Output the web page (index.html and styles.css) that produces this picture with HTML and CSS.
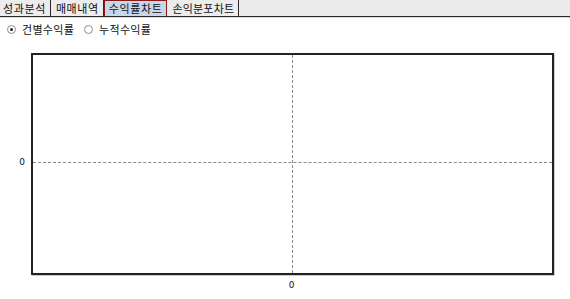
FILE: index.html
```html
<!DOCTYPE html>
<html lang="ko">
<head>
<meta charset="utf-8">
<link rel="stylesheet" href="styles.css">
</head>
<body>
<div class="tabs">
  <div class="tab">성과분석</div>
  <div class="tab">매매내역</div>
  <div class="tab active">수익률차트</div>
  <div class="tab tight">손익분포차트</div>
</div>
<div class="options">
  <label class="opt"><span class="radio checked"></span>건별수익률</label>
  <label class="opt"><span class="radio"></span>누적수익률</label>
</div>
<div class="chart-area">
  <div class="yaxis"><span class="ylabel">0</span></div>
  <div class="plot-col">
    <div class="plot">
      <div class="hline"></div>
      <div class="vline"></div>
    </div>
    <div class="xaxis"><span>0</span></div>
  </div>
</div>
</body>
</html>
```
FILE: styles.css
```css
html, body { margin: 0; padding: 0; background: #fff; }
body {
  width: 570px; height: 299px; overflow: hidden;
  font-family: "Noto Sans CJK KR", "Noto Sans", sans-serif;
  font-size: 11px; color: #111;
}
.tabs {
  display: flex; height: 16px;
  background: #ebebeb;
  border-bottom: 1px solid #2a2a2a;
  box-shadow: 0 1px 0 #d8d8d8;
}
.tab {
  height: 16px; line-height: 16px;
  padding: 0 4px 0 4px;
  background: #ececec;
  border-right: 1px solid #2a2a2a;
  margin-right: 1px;
  letter-spacing: 0.6px;
}
.tab:first-child { padding-left: 3px; }
.tab.tight { letter-spacing: 0.2px; }
.tab.active {
  background: #c8d6e8;
  border: 1px solid #8a1a1a;
  border-bottom: none;
  height: 15px; line-height: 15px;
  margin-left: -1px;
  padding: 0 4px 0 4px;
}
.options {
  display: flex; align-items: center; gap: 10px;
  height: 20px; padding-left: 7px; padding-top: 2px;
}
.opt { display: flex; align-items: center; gap: 6px; letter-spacing: 0.3px; }
.radio {
  width: 7px; height: 7px; border-radius: 50%;
  border: 1px solid #8a8a8a; background: #fff;
  display: inline-flex; align-items: center; justify-content: center;
}
.radio.checked::after {
  content: ""; width: 3px; height: 3px; border-radius: 50%; background: #222;
}
.chart-area {
  display: flex; padding-top: 14px;
}
.yaxis {
  width: 31px; height: 222px; position: relative;
}
.ylabel {
  position: absolute; right: 6px; top: 104px; font-size: 9px;
  font-family: "DejaVu Sans", sans-serif; line-height: 10px;
}
.plot-col { display: flex; flex-direction: column; }
.plot {
  width: 519px; height: 218px;
  border: 2px solid #222;
  box-shadow: 1px 1px 0 #cfcfcf;
  position: relative; background: #fff;
}
.hline {
  position: absolute; left: 0; right: 0; top: 107px;
  border-top: 1px dashed #8a8a8a;
}
.vline {
  position: absolute; top: 0; bottom: 0; left: 259px;
  border-left: 1px dashed #8a8a8a;
}
.xaxis {
  width: 523px; text-align: center; padding-top: 5px;
  font-family: "DejaVu Sans", sans-serif; font-size: 9px; line-height: 10px;
}
.xaxis span { position: relative; left: -1px; }
```
